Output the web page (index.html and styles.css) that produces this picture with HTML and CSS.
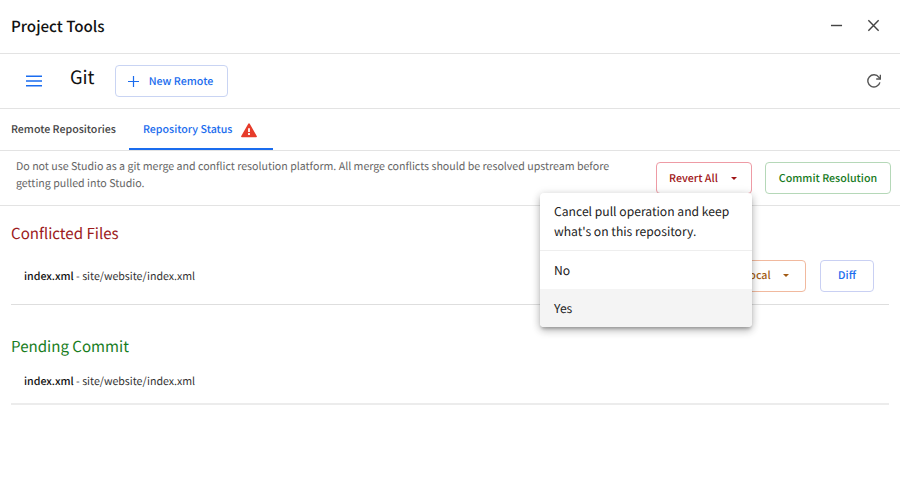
FILE: index.html
```html
<!DOCTYPE html>
<html lang="en">
<head>
<meta charset="utf-8">
<title>Project Tools</title>
<link rel="stylesheet" href="styles.css">
</head>
<body>
<header class="titlebar">
  <h1 class="title">Project Tools</h1>
  <svg class="win-icon" viewBox="0 0 24 24"><path d="M5 12h14"/></svg>
  <svg class="win-icon" viewBox="0 0 24 24"><path d="M5.500 5.500l13 13M18.500 5.500L5.500 18.500"/></svg>
</header>
<div class="toolbar">
  <svg class="menu-icon" viewBox="0 0 16 12"><path d="M0 1.2h16M0 6h16M0 10.8h16"/></svg>
  <h2 class="page-name">Git</h2>
  <button class="btn btn-remote"><svg class="plus" viewBox="0 0 11 11"><path d="M5.5 0v11M0 5.500h11"/></svg><span>New Remote</span></button>
  <svg class="refresh" viewBox="0 0 14 14"><path d="M12.9 8.300A6.100 6.100 0 1 1 11.900 3.300L13 4.600"/><path d="M13.400.800v4.200H9.200"/></svg>
</div>
<nav class="tabs">
  <a class="tab">Remote Repositories</a>
  <a class="tab active"><span>Repository Status</span><svg class="warn" viewBox="0 0 24 24"><path d="M2.500 21.500h19q1.500 0 .8-1.400L13 3.600q-1-1.500-2 0L1.700 20.100q-.7 1.400.8 1.400zM13.200 18.500h-2.400v-2.400h2.400zm0-4h-2.400v-5h2.400z"/></svg></a>
</nav>
<section class="notice">
  <p class="notice-text">Do not use Studio as a git merge and conflict resolution platform. All merge conflicts should be resolved upstream before getting pulled into Studio.</p>
  <div class="revert-wrap">
    <button class="btn btn-revert"><span>Revert All</span><i class="caret"></i></button>
    <div class="menu">
      <p class="menu-text">Cancel pull operation and keep what's on this repository.</p>
      <div class="menu-item">No</div>
      <div class="menu-item selected">Yes</div>
    </div>
  </div>
  <button class="btn btn-commit">Commit Resolution</button>
</section>
<main>
  <h3 class="heading conflicted">Conflicted Files</h3>
  <div class="row row-conflict">
    <span class="file"><b>index.xml</b> - site/website/index.xml</span>
    <button class="btn btn-keep"><span>Keep Local</span><i class="caret"></i></button>
    <button class="btn btn-diff">Diff</button>
  </div>
  <h3 class="heading pending">Pending Commit</h3>
  <div class="row row-pending">
    <span class="file"><b>index.xml</b> - site/website/index.xml</span>
  </div>
</main>
</body>
</html>
```
FILE: styles.css
```css
* { box-sizing: border-box; }
body { margin: 0; height: 484px; overflow: hidden; background: #fff; color: #111; font: 400 10.64px/17px "Noto Sans CJK SC", sans-serif; text-rendering: geometricPrecision; }
h1, h2, h3, p { margin: 0; font-weight: 400; }
svg { flex: none; fill: none; }
.titlebar { display: flex; align-items: center; height: 54px; padding: 0 17px 2px 11px; border-bottom: 1px solid #e3e3e3; }
.title { flex: 1; font-size: 15.15px; line-height: 24px; font-weight: 500; }
.win-icon { width: 19px; height: 19px; margin-left: 18px; stroke: #444; stroke-width: 1.8; }
.toolbar { display: flex; align-items: center; height: 55px; padding: 0 18px 0 26px; border-bottom: 1px solid #e3e3e3; }
.menu-icon { width: 16px; height: 12px; stroke: #1a6cf0; stroke-width: 1.5; }
.page-name { width: 45px; margin: -8px 0 0 28px; font-size: 18.3px; line-height: 28px; }
.btn { display: flex; align-items: center; justify-content: center; height: 32px; padding: 0; border: 1px solid; border-radius: 4px; background: #fff; font: 500 10.7px/17px "Noto Sans CJK SC", sans-serif; text-rendering: inherit; white-space: nowrap; }
.btn-remote { width: 113px; gap: 10px; padding-right: 2px; color: #1a6cee; border-color: #c9d4f3; }
.plus { width: 11px; height: 11px; stroke: #1a6cee; stroke-width: 1.2; }
.refresh { width: 14px; height: 14px; margin-left: auto; margin-right: 1px; stroke: #555; stroke-width: 1.4; }
.tabs { display: flex; height: 42px; border-bottom: 1px solid #e3e3e3; }
.tab { display: flex; align-items: center; height: 41px; padding-left: 11px; width: 129px; font-weight: 500; color: #444; white-space: nowrap; }
.tab.active { width: 144px; padding: 2px 0 0 14px; gap: 8px; color: #1a6cee; border-bottom: 2px solid #1a6cee; }
.warn { width: 18px; height: 18px; fill: #e63c2b; }
.notice { display: flex; height: 55px; padding: 7px 9px 0 16px; border-bottom: 1px solid #e3e3e3; }
.notice-text { width: 640px; padding-right: 35px; color: #666; }
.revert-wrap { position: relative; margin-top: 4px; }
.btn-revert { width: 96px; gap: 13px; padding-right: 2px; color: #a01416; border-color: #ee9ba5; }
.caret { border: 3px solid transparent; border-top-color: currentColor; border-bottom: 0; }
.btn-commit { width: 126px; margin: 4px 0 0 13px; color: #167a1c; border-color: #b5d8b8; }
.menu { position: absolute; z-index: 2; top: 31px; right: 0; width: 212px; height: 134px; border-radius: 4px; background: #fff; overflow: hidden; box-shadow: 0 3px 3px -1px #0003, 0 4px 9px #0003, 0 1px 10px #0002; font-size: 12.15px; color: #222; }
.menu-text { height: 58px; padding: 9px 14px; line-height: 20px; border-bottom: 1px solid #eee; }
.menu-item { height: 38px; padding: 0 14px; line-height: 39px; }
.selected { background: #f4f4f4; }
main { padding: 0 11px; }
.heading { font-size: 15.1px; line-height: 24px; }
.conflicted { padding-top: 15px; color: #9c1a1c; }
.pending { padding-top: 29px; color: #187d1d; }
.row { display: flex; align-items: center; padding: 0 15px 0 13px; border-bottom: 1px solid #dedede; }
.row-conflict { height: 60px; padding-top: 2px; }
.row-pending { height: 47px; padding-top: 2px; border-bottom-width: 2px; border-color: #ececec; }
.file { flex: 1; color: #333; }
.file b { font-weight: 500; color: #111; }
.row-conflict .file { padding-top: 1px; }
.btn-keep { width: 108px; gap: 12px; color: #a25b14; border-color: #f1b99e; }
.btn-diff { width: 54px; margin-left: 14px; color: #1a6cee; border-color: #c9d0f3; }
```
